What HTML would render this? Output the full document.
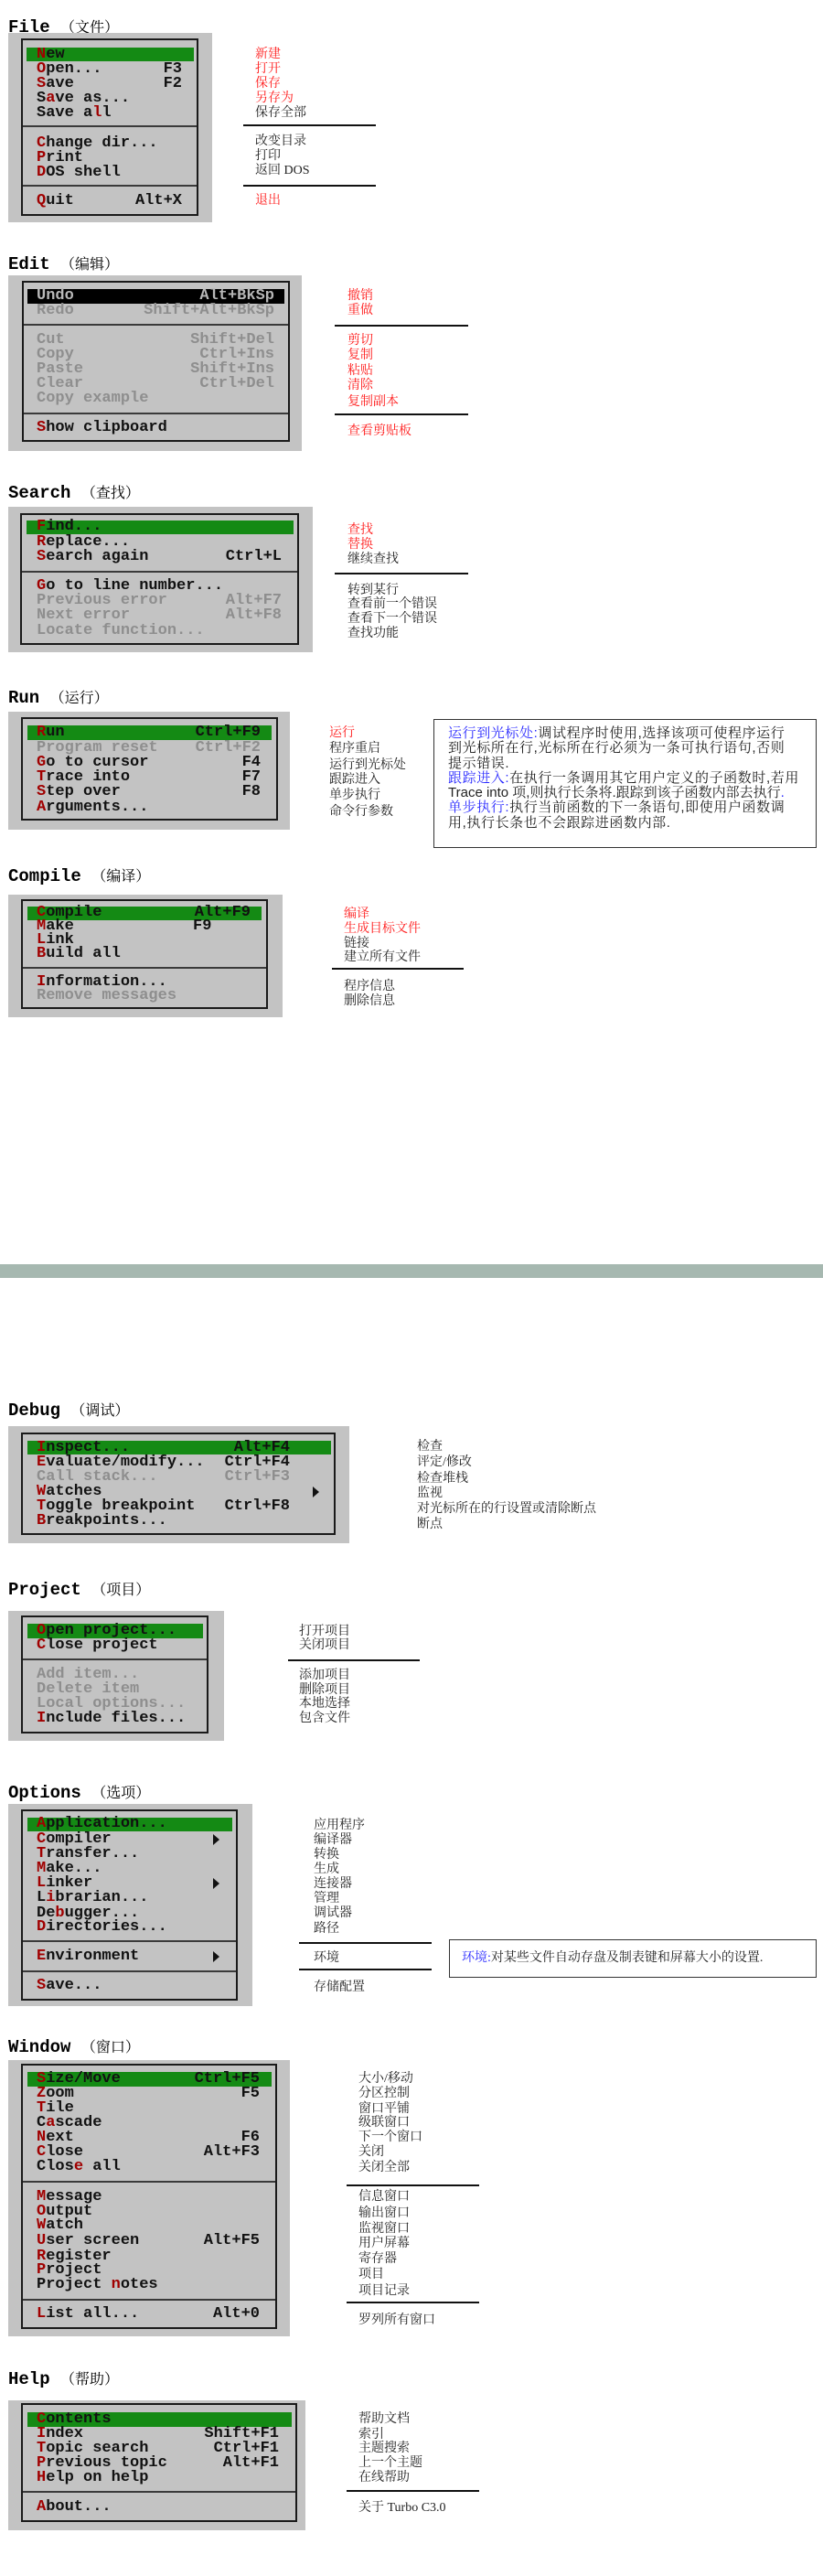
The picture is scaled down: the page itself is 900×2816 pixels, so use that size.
<!DOCTYPE html>
<html><head><meta charset="utf-8">
<style>
*{margin:0;padding:0;box-sizing:border-box}
body{width:900px;height:2816px;position:relative;background:#fff;overflow:hidden;font-family:"Liberation Mono","Noto Sans CJK SC",monospace}
div{position:absolute;white-space:nowrap}
.t{left:9px;font:bold 19px/22px "Liberation Mono","Noto Sans CJK SC",monospace;color:#000}
.t span{font:16px "Noto Serif CJK SC",serif}
.g{background:#c3c3c3}
.i{border:2px solid #1a1a1a}
.hl{background:#148a14}
.hb{background:#000}
.sp{height:2px;background:#3a3a3a}
.m{font:bold 17px/16px "Liberation Mono",monospace;height:16px;color:#111;left:40px}
.m b{color:#a00000}
.x{color:#8e8e8e}
.x b{color:#8e8e8e}
.k{font:bold 17px/16px "Liberation Mono",monospace;height:16px;color:#111}
.kx{color:#8e8e8e}
.d{font:14px/16px "Liberation Serif","Noto Serif CJK SC",serif;color:#222;height:16px}
.r{color:#ff1a1a}
.ln{height:2px;background:#111}
.ar{width:0;height:0;border-top:6px solid transparent;border-bottom:6px solid transparent;border-left:7px solid #111}
.bx{border:1.5px solid #333;background:#fff}
.bt{font:15px/16.3px "Liberation Sans","Noto Serif CJK SC",serif;color:#222;letter-spacing:0.6px}
.bl{color:#2a2aff}
</style></head><body>

<!-- FILE -->
<div class="t" style="top:17px">File <span>（文件）</span></div>
<div class="g" style="left:9px;top:36px;width:223px;height:207px"></div>
<div class="i" style="left:23px;top:42px;width:194px;height:194px"></div>
<div class="hl" style="left:29px;top:52px;width:183px;height:15px"></div>
<div class="m" style="top:52px"><b>N</b>ew</div>
<div class="m" style="top:68px"><b>O</b>pen...</div><div class="k" style="top:68px;right:701px">F3</div>
<div class="m" style="top:84px"><b>S</b>ave</div><div class="k" style="top:84px;right:701px">F2</div>
<div class="m" style="top:100px">S<b>a</b>ve as...</div>
<div class="m" style="top:116px">Save a<b>l</b>l</div>
<div class="sp" style="left:25px;top:137px;width:190px"></div>
<div class="m" style="top:149px"><b>C</b>hange dir...</div>
<div class="m" style="top:165px"><b>P</b>rint</div>
<div class="m" style="top:181px"><b>D</b>OS shell</div>
<div class="sp" style="left:25px;top:202px;width:190px"></div>
<div class="m" style="top:212px"><b>Q</b>uit</div><div class="k" style="top:212px;right:701px">Alt+X</div>
<div class="d r" style="left:279px;top:52px">新建</div>
<div class="d r" style="left:279px;top:68px">打开</div>
<div class="d r" style="left:279px;top:84px">保存</div>
<div class="d r" style="left:279px;top:100px">另存为</div>
<div class="d" style="left:279px;top:116px">保存全部</div>
<div class="ln" style="left:266px;top:136px;width:145px"></div>
<div class="d" style="left:279px;top:147px">改变目录</div>
<div class="d" style="left:279px;top:163px">打印</div>
<div class="d" style="left:279px;top:179px">返回 DOS</div>
<div class="ln" style="left:266px;top:202px;width:145px"></div>
<div class="d r" style="left:279px;top:212px">退出</div>

<!-- EDIT -->
<div class="t" style="top:276px">Edit <span>（编辑）</span></div>
<div class="g" style="left:9px;top:301px;width:321px;height:192px"></div>
<div class="i" style="left:24px;top:307px;width:293px;height:176px"></div>
<div class="hb" style="left:30px;top:316px;width:281px;height:16px"></div>
<div class="m" style="top:316px;color:#b8b8b8">Undo</div><div class="k" style="top:316px;right:600px;color:#b8b8b8">Alt+BkSp</div>
<div class="m x" style="top:332px">Redo</div><div class="k kx" style="top:332px;right:600px">Shift+Alt+BkSp</div>
<div class="sp" style="left:26px;top:354px;width:289px"></div>
<div class="m x" style="top:364px">Cut</div><div class="k kx" style="top:364px;right:600px">Shift+Del</div>
<div class="m x" style="top:380px">Copy</div><div class="k kx" style="top:380px;right:600px">Ctrl+Ins</div>
<div class="m x" style="top:396px">Paste</div><div class="k kx" style="top:396px;right:600px">Shift+Ins</div>
<div class="m x" style="top:412px">Clear</div><div class="k kx" style="top:412px;right:600px">Ctrl+Del</div>
<div class="m x" style="top:428px">Copy example</div>
<div class="sp" style="left:26px;top:451px;width:289px"></div>
<div class="m" style="top:460px"><b>S</b>how clipboard</div>
<div class="d r" style="left:380px;top:316px">撤销</div>
<div class="d r" style="left:380px;top:332px">重做</div>
<div class="ln" style="left:366px;top:355px;width:146px"></div>
<div class="d r" style="left:380px;top:365px">剪切</div>
<div class="d r" style="left:380px;top:381px">复制</div>
<div class="d r" style="left:380px;top:398px">粘贴</div>
<div class="d r" style="left:380px;top:414px">清除</div>
<div class="d r" style="left:380px;top:432px">复制副本</div>
<div class="ln" style="left:366px;top:452px;width:146px"></div>
<div class="d r" style="left:380px;top:464px">查看剪贴板</div>

<!-- SEARCH -->
<div class="t" style="top:526px">Search <span>（查找）</span></div>
<div class="g" style="left:9px;top:554px;width:333px;height:159px"></div>
<div class="i" style="left:22px;top:561px;width:305px;height:144px"></div>
<div class="hl" style="left:29px;top:569px;width:292px;height:15px"></div>
<div class="m" style="top:568px"><b>F</b>ind...</div>
<div class="m" style="top:585px"><b>R</b>eplace...</div>
<div class="m" style="top:601px"><b>S</b>earch again</div><div class="k" style="top:601px;right:592px">Ctrl+L</div>
<div class="sp" style="left:24px;top:624px;width:301px"></div>
<div class="m" style="top:633px"><b>G</b>o to line number...</div>
<div class="m x" style="top:649px">Previous error</div><div class="k kx" style="top:649px;right:592px">Alt+F7</div>
<div class="m x" style="top:665px">Next error</div><div class="k kx" style="top:665px;right:592px">Alt+F8</div>
<div class="m x" style="top:682px">Locate function...</div>
<div class="d r" style="left:380px;top:572px">查找</div>
<div class="d r" style="left:380px;top:588px">替换</div>
<div class="d" style="left:380px;top:604px">继续查找</div>
<div class="ln" style="left:366px;top:626px;width:146px"></div>
<div class="d" style="left:380px;top:638px">转到某行</div>
<div class="d" style="left:380px;top:653px">查看前一个错误</div>
<div class="d" style="left:380px;top:669px">查看下一个错误</div>
<div class="d" style="left:380px;top:685px">查找功能</div>

<!-- RUN -->
<div class="t" style="top:750px">Run <span>（运行）</span></div>
<div class="g" style="left:9px;top:778px;width:308px;height:129px"></div>
<div class="i" style="left:23px;top:784px;width:281px;height:113px"></div>
<div class="hl" style="left:30px;top:793px;width:267px;height:16px"></div>
<div class="m" style="top:793px"><b>R</b>un</div><div class="k" style="top:793px;right:615px">Ctrl+F9</div>
<div class="m x" style="top:810px">Program reset</div><div class="k kx" style="top:810px;right:615px">Ctrl+F2</div>
<div class="m" style="top:826px"><b>G</b>o to cursor</div><div class="k" style="top:826px;right:615px">F4</div>
<div class="m" style="top:842px"><b>T</b>race into</div><div class="k" style="top:842px;right:615px">F7</div>
<div class="m" style="top:858px"><b>S</b>tep over</div><div class="k" style="top:858px;right:615px">F8</div>
<div class="m" style="top:875px"><b>A</b>rguments...</div>
<div class="d r" style="left:360px;top:794px">运行</div>
<div class="d" style="left:360px;top:811px">程序重启</div>
<div class="d" style="left:360px;top:829px">运行到光标处</div>
<div class="d" style="left:360px;top:845px">跟踪进入</div>
<div class="d" style="left:360px;top:862px">单步执行</div>
<div class="d" style="left:360px;top:880px">命令行参数</div>
<div class="bx" style="left:474px;top:786px;width:419px;height:141px"></div>
<div class="bt" style="left:490px;top:794px"><span class="bl">运行到光标处:</span>调试程序时使用,选择该项可使程序运行</div>
<div class="bt" style="left:490px;top:810px">到光标所在行,光标所在行必须为一条可执行语句,否则</div>
<div class="bt" style="left:490px;top:827px">提示错误.</div>
<div class="bt" style="left:490px;top:843px"><span class="bl">跟踪进入:</span>在执行一条调用其它用户定义的子函数时,若用</div>
<div class="bt" style="left:490px;top:859px;letter-spacing:0">Trace into 项,则执行长条将.跟踪到该子函数内部去执行<span class="bl">.</span></div>
<div class="bt" style="left:490px;top:875px"><span class="bl">单步执行:</span>执行当前函数的下一条语句,即使用户函数调</div>
<div class="bt" style="left:490px;top:892px">用,执行长条也不会跟踪进函数内部.</div>

<!-- COMPILE -->
<div class="t" style="top:945px">Compile <span>（编译）</span></div>
<div class="g" style="left:9px;top:978px;width:300px;height:134px"></div>
<div class="i" style="left:23px;top:983px;width:270px;height:120px"></div>
<div class="hl" style="left:30px;top:991px;width:256px;height:15px"></div>
<div class="m" style="top:990px"><b>C</b>ompile</div><div class="k" style="top:990px;right:626px">Alt+F9</div>
<div class="m" style="top:1005px"><b>M</b>ake</div><div class="k" style="top:1005px;left:211px">F9</div>
<div class="m" style="top:1020px"><b>L</b>ink</div>
<div class="m" style="top:1035px"><b>B</b>uild all</div>
<div class="sp" style="left:25px;top:1057px;width:266px"></div>
<div class="m" style="top:1066px"><b>I</b>nformation...</div>
<div class="m x" style="top:1081px">Remove messages</div>
<div class="d r" style="left:376px;top:992px">编译</div>
<div class="d r" style="left:376px;top:1008px">生成目标文件</div>
<div class="d" style="left:376px;top:1024px">链接</div>
<div class="d" style="left:376px;top:1039px">建立所有文件</div>
<div class="ln" style="left:363px;top:1058px;width:144px"></div>
<div class="d" style="left:376px;top:1071px">程序信息</div>
<div class="d" style="left:376px;top:1087px">删除信息</div>

<!-- BAND -->
<div style="left:0;top:1382px;width:900px;height:15px;background:#a6b8b0"></div>

<!-- DEBUG -->
<div class="t" style="top:1529px">Debug <span>（调试）</span></div>
<div class="g" style="left:9px;top:1559px;width:373px;height:128px"></div>
<div class="i" style="left:23px;top:1566px;width:344px;height:112px"></div>
<div class="hl" style="left:30px;top:1575px;width:332px;height:15px"></div>
<div class="m" style="top:1575px"><b>I</b>nspect...</div><div class="k" style="top:1575px;right:583px">Alt+F4</div>
<div class="m" style="top:1591px"><b>E</b>valuate/modify...</div><div class="k" style="top:1591px;right:583px">Ctrl+F4</div>
<div class="m x" style="top:1607px">Call stack...</div><div class="k kx" style="top:1607px;right:583px">Ctrl+F3</div>
<div class="m" style="top:1623px"><b>W</b>atches</div><div class="ar" style="left:342px;top:1625px"></div>
<div class="m" style="top:1639px"><b>T</b>oggle breakpoint</div><div class="k" style="top:1639px;right:583px">Ctrl+F8</div>
<div class="m" style="top:1655px"><b>B</b>reakpoints...</div>
<div class="d" style="left:456px;top:1574px">检查</div>
<div class="d" style="left:456px;top:1591px">评定/修改</div>
<div class="d" style="left:456px;top:1609px">检查堆栈</div>
<div class="d" style="left:456px;top:1625px">监视</div>
<div class="d" style="left:456px;top:1642px">对光标所在的行设置或清除断点</div>
<div class="d" style="left:456px;top:1659px">断点</div>

<!-- PROJECT -->
<div class="t" style="top:1725px">Project <span>（项目）</span></div>
<div class="g" style="left:9px;top:1761px;width:236px;height:142px"></div>
<div class="i" style="left:23px;top:1766px;width:205px;height:129px"></div>
<div class="hl" style="left:30px;top:1775px;width:192px;height:16px"></div>
<div class="m" style="top:1775px"><b>O</b>pen project...</div>
<div class="m" style="top:1791px"><b>C</b>lose project</div>
<div class="sp" style="left:25px;top:1813px;width:201px"></div>
<div class="m x" style="top:1823px">Add item...</div>
<div class="m x" style="top:1839px">Delete item</div>
<div class="m x" style="top:1855px">Local options...</div>
<div class="m" style="top:1871px"><b>I</b>nclude files...</div>
<div class="d" style="left:327px;top:1776px">打开项目</div>
<div class="d" style="left:327px;top:1791px">关闭项目</div>
<div class="ln" style="left:315px;top:1814px;width:144px"></div>
<div class="d" style="left:327px;top:1824px">添加项目</div>
<div class="d" style="left:327px;top:1840px">删除项目</div>
<div class="d" style="left:327px;top:1855px">本地选择</div>
<div class="d" style="left:327px;top:1871px">包含文件</div>

<!-- OPTIONS -->
<div class="t" style="top:1947px">Options <span>（选项）</span></div>
<div class="g" style="left:9px;top:1972px;width:267px;height:221px"></div>
<div class="i" style="left:23px;top:1978px;width:237px;height:209px"></div>
<div class="hl" style="left:30px;top:1987px;width:224px;height:15px"></div>
<div class="m" style="top:1986px"><b>A</b>pplication...</div>
<div class="m" style="top:2003px"><b>C</b>ompiler</div><div class="ar" style="left:233px;top:2005px"></div>
<div class="m" style="top:2019px"><b>T</b>ransfer...</div>
<div class="m" style="top:2035px"><b>M</b>ake...</div>
<div class="m" style="top:2051px"><b>L</b>inker</div><div class="ar" style="left:233px;top:2053px"></div>
<div class="m" style="top:2067px">L<b>i</b>brarian...</div>
<div class="m" style="top:2084px">De<b>b</b>ugger...</div>
<div class="m" style="top:2099px"><b>D</b>irectories...</div>
<div class="sp" style="left:25px;top:2121px;width:233px"></div>
<div class="m" style="top:2131px"><b>E</b>nvironment</div><div class="ar" style="left:233px;top:2133px"></div>
<div class="sp" style="left:25px;top:2154px;width:233px"></div>
<div class="m" style="top:2163px"><b>S</b>ave...</div>
<div class="d" style="left:343px;top:1988px">应用程序</div>
<div class="d" style="left:343px;top:2004px">编译器</div>
<div class="d" style="left:343px;top:2020px">转换</div>
<div class="d" style="left:343px;top:2036px">生成</div>
<div class="d" style="left:343px;top:2052px">连接器</div>
<div class="d" style="left:343px;top:2068px">管理</div>
<div class="d" style="left:343px;top:2084px">调试器</div>
<div class="d" style="left:343px;top:2101px">路径</div>
<div class="ln" style="left:327px;top:2123px;width:145px"></div>
<div class="d" style="left:343px;top:2133px">环境</div>
<div class="ln" style="left:327px;top:2152px;width:145px"></div>
<div class="d" style="left:343px;top:2165px">存储配置</div>
<div class="bx" style="left:491px;top:2120px;width:402px;height:42px"></div>
<div class="d" style="left:505px;top:2133px"><span class="bl">环境:</span>对某些文件自动存盘及制表键和屏幕大小的设置.</div>

<!-- WINDOW -->
<div class="t" style="top:2225px">Window <span>（窗口）</span></div>
<div class="g" style="left:9px;top:2252px;width:308px;height:302px"></div>
<div class="i" style="left:23px;top:2256px;width:280px;height:290px"></div>
<div class="hl" style="left:30px;top:2265px;width:267px;height:16px"></div>
<div class="m" style="top:2265px"><b>S</b>ize/Move</div><div class="k" style="top:2265px;right:616px">Ctrl+F5</div>
<div class="m" style="top:2281px"><b>Z</b>oom</div><div class="k" style="top:2281px;right:616px">F5</div>
<div class="m" style="top:2297px"><b>T</b>ile</div>
<div class="m" style="top:2313px">C<b>a</b>scade</div>
<div class="m" style="top:2329px"><b>N</b>ext</div><div class="k" style="top:2329px;right:616px">F6</div>
<div class="m" style="top:2345px"><b>C</b>lose</div><div class="k" style="top:2345px;right:616px">Alt+F3</div>
<div class="m" style="top:2361px">Clos<b>e</b> all</div>
<div class="sp" style="left:25px;top:2384px;width:276px"></div>
<div class="m" style="top:2394px"><b>M</b>essage</div>
<div class="m" style="top:2410px"><b>O</b>utput</div>
<div class="m" style="top:2425px"><b>W</b>atch</div>
<div class="m" style="top:2442px"><b>U</b>ser screen</div><div class="k" style="top:2442px;right:616px">Alt+F5</div>
<div class="m" style="top:2459px"><b>R</b>egister</div>
<div class="m" style="top:2474px"><b>P</b>roject</div>
<div class="m" style="top:2490px">Project <b>n</b>otes</div>
<div class="sp" style="left:25px;top:2513px;width:276px"></div>
<div class="m" style="top:2522px"><b>L</b>ist all...</div><div class="k" style="top:2522px;right:616px">Alt+0</div>
<div class="d" style="left:392px;top:2265px">大小/移动</div>
<div class="d" style="left:392px;top:2281px">分区控制</div>
<div class="d" style="left:392px;top:2298px">窗口平铺</div>
<div class="d" style="left:392px;top:2313px">级联窗口</div>
<div class="d" style="left:392px;top:2329px">下一个窗口</div>
<div class="d" style="left:392px;top:2345px">关闭</div>
<div class="d" style="left:392px;top:2362px">关闭全部</div>
<div class="ln" style="left:379px;top:2388px;width:145px"></div>
<div class="d" style="left:392px;top:2394px">信息窗口</div>
<div class="d" style="left:392px;top:2412px">输出窗口</div>
<div class="d" style="left:392px;top:2429px">监视窗口</div>
<div class="d" style="left:392px;top:2445px">用户屏幕</div>
<div class="d" style="left:392px;top:2462px">寄存器</div>
<div class="d" style="left:392px;top:2479px">项目</div>
<div class="d" style="left:392px;top:2497px">项目记录</div>
<div class="ln" style="left:379px;top:2516px;width:145px"></div>
<div class="d" style="left:392px;top:2529px">罗列所有窗口</div>

<!-- HELP -->
<div class="t" style="top:2588px">Help <span>（帮助）</span></div>
<div class="g" style="left:9px;top:2624px;width:325px;height:142px"></div>
<div class="i" style="left:23px;top:2627px;width:302px;height:130px"></div>
<div class="hl" style="left:30px;top:2637px;width:289px;height:16px"></div>
<div class="m" style="top:2637px"><b>C</b>ontents</div>
<div class="m" style="top:2653px"><b>I</b>ndex</div><div class="k" style="top:2653px;right:595px">Shift+F1</div>
<div class="m" style="top:2669px"><b>T</b>opic search</div><div class="k" style="top:2669px;right:595px">Ctrl+F1</div>
<div class="m" style="top:2685px"><b>P</b>revious topic</div><div class="k" style="top:2685px;right:595px">Alt+F1</div>
<div class="m" style="top:2701px"><b>H</b>elp on help</div>
<div class="sp" style="left:25px;top:2723px;width:298px"></div>
<div class="m" style="top:2733px"><b>A</b>bout...</div>
<div class="d" style="left:392px;top:2637px">帮助文档</div>
<div class="d" style="left:392px;top:2654px">索引</div>
<div class="d" style="left:392px;top:2669px">主题搜索</div>
<div class="d" style="left:392px;top:2685px">上一个主题</div>
<div class="d" style="left:392px;top:2701px">在线帮助</div>
<div class="ln" style="left:379px;top:2722px;width:145px"></div>
<div class="d" style="left:392px;top:2734px">关于 Turbo C3.0</div>

</body></html>
